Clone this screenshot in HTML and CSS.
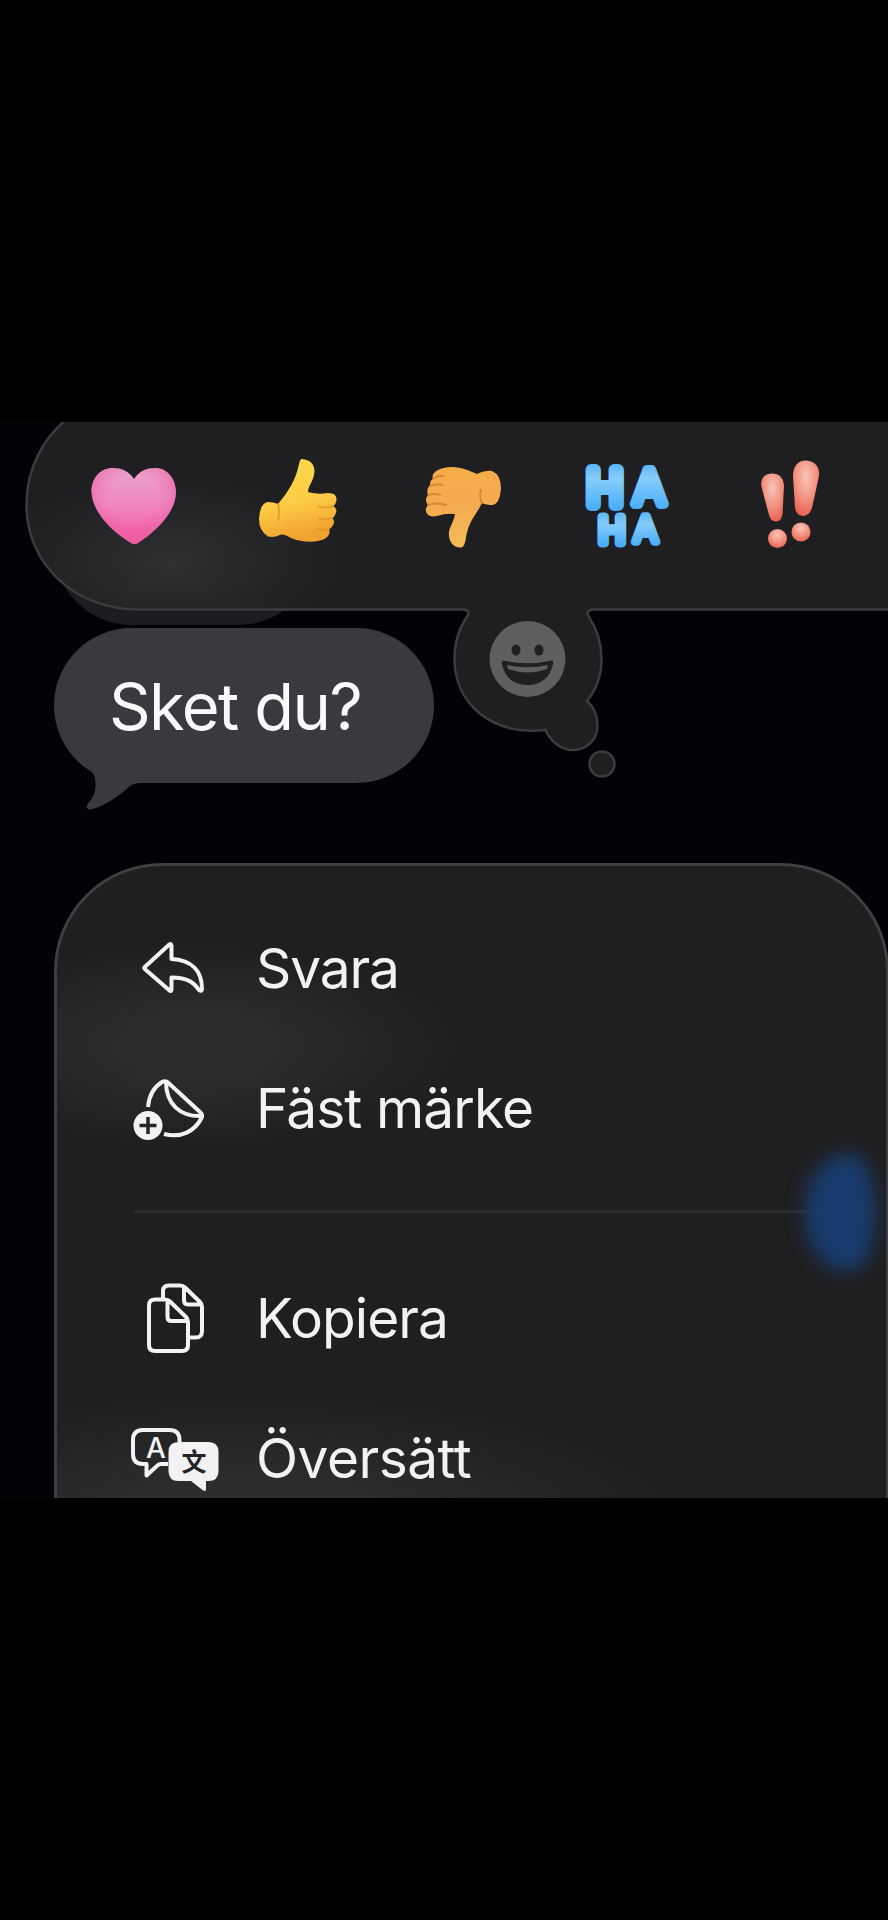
FILE: index.html
```html
<!DOCTYPE html>
<html lang="sv">
<head>
<meta charset="utf-8">
<title>Meddelanden</title>
<link rel="stylesheet" href="styles.css">
</head>
<body>
<main class="screen">
  <div class="previous-bubble"></div>
  <svg class="tray-shape" viewBox="0 422 888 360" aria-hidden="true">
    <defs>
      <clipPath id="trayClip"><path d="M66 400C40 435 28 470 28 505C28 562 73 608 140 608H900V400Z"/></clipPath>
      <radialGradient id="trayGlow"><stop offset="0" stop-color="#303032"/><stop offset=".45" stop-color="#2b2b2e" stop-opacity=".75"/><stop offset="1" stop-color="#29292c" stop-opacity="0"/></radialGradient>
    </defs>
    <path class="glass" d="M72 415C42 437 26.500 470 26.500 505C26.500 563 73 609.500 140 609.500H463Q471 610 467.500 616C459 628 454.500 643 454.500 659C454.500 703 491 736 545.500 730C551 742 561 750 573 750C587 750 597.500 739 597.500 726C597.500 716 594 707 587 701C597 689 601.500 674 601.500 659C601.500 643 597 629 589 617Q585 610 593 609.500H900V415Z"/>
    <g clip-path="url(#trayClip)">
      <ellipse cx="170" cy="562" rx="170" ry="85" fill="url(#trayGlow)"/>
    </g>
    <circle class="glass" cx="602" cy="764" r="12.500"/>
    <circle cx="527.500" cy="659" r="38" fill="#5f5f61"/>
    <ellipse cx="516" cy="650" rx="4.500" ry="5.500" fill="#202022"/>
    <ellipse cx="539" cy="650" rx="4.500" ry="5.500" fill="#202022"/>
    <path d="M503.500 660.500Q527.500 666 551.500 660.500Q554 660.500 553 664C550 678 541 685 527.500 685C514 685 505 678 502 664Q501.500 660.500 503.500 660.500Z" fill="#202022"/>
    <path d="M507 665Q527.500 669.500 548 665L547 669Q528 676 508 669Z" fill="#5f5f61"/>
  </svg>

  <nav class="reactions">
    <svg class="reaction" viewBox="52 422 164 188">
      <defs>
        <linearGradient id="heart" x1="0" y1="0" x2="0" y2="1"><stop offset="0" stop-color="#e9a6ca"/><stop offset=".5" stop-color="#f184bf"/><stop offset="1" stop-color="#f25598"/></linearGradient>
        <radialGradient id="heartShade" cx=".5" cy=".4" r=".6"><stop offset=".5" stop-color="#ec5da5" stop-opacity="0"/><stop offset="1" stop-color="#ec5da5" stop-opacity=".7"/></radialGradient>
      </defs>
      <path d="M134 479C129 471 121 468 113 468C100 468 91.500 478 91.500 492C92.500 512 111 531 131 543Q134.500 545 138 543C158 530 175.500 512 176 492C175.500 478 167 468 155 468C147 468 139 471 134 479Z" fill="url(#heart)"/>
      <path d="M134 479C129 471 121 468 113 468C100 468 91.500 478 91.500 492C92.500 512 111 531 131 543Q134.500 545 138 543C158 530 175.500 512 176 492C175.500 478 167 468 155 468C147 468 139 471 134 479Z" fill="url(#heartShade)"/>
    </svg>
    <svg class="reaction" viewBox="216 422 164 188">
      <defs>
        <linearGradient id="up" x1="0" y1="0" x2=".2" y2="1"><stop offset="0" stop-color="#fbdb4e"/><stop offset=".6" stop-color="#fdcb45"/><stop offset="1" stop-color="#f0a32f"/></linearGradient>
      </defs>
      <path d="M302 459Q314 460 314.500 471C314 481 308 486 308 492Q318 495 328 493Q337 493 336.500 500Q336 504 333.500 506Q338 510 335.500 514Q334 517.500 332.500 518Q335.500 522 332.500 526Q331 528.500 329 529Q331 534 326 538C318 543 303 543 291 538Q285 534 281 534.500Q275 538 268 536.500Q259 531 259 519Q260 503 268 502Q273 502 278 504C288 492 296 480 299 464Q300 459 302 459Z" fill="url(#up)"/>
      <g class="crease crease-up"><path d="M333 506Q325 509 319 506.500"/><path d="M332 518Q325 520.500 319 518"/><path d="M329 529Q324 531 318 529"/><path d="M278 504Q280 513 278 520"/></g>
    </svg>
    <svg class="reaction" viewBox="380 422 164 188">
      <defs>
        <linearGradient id="down" x1="0" y1="0" x2=".1" y2="1"><stop offset="0" stop-color="#f5ad49"/><stop offset=".5" stop-color="#f4ab50"/><stop offset="1" stop-color="#f4bb58"/></linearGradient>
      </defs>
      <path d="M452 467C462 467 470 471 477 474Q486 470 492 471Q501 475 501 488Q500 503 493 505Q486 505 482 503C477 514 469 520 466 537Q465 547 461 547.500C453 548 448 541 449 532C450 526 454 521 455 514Q446 513 437 516Q427 518 426 511Q425 508 428 505Q424 500 428 495Q426 489 430 485Q430 480 433 479Q431 475 436 471Q443 467 452 467Z" fill="url(#down)"/>
      <g class="crease crease-down"><path d="M433 479Q438 475 443 476"/><path d="M430 486Q437 483 442 485"/><path d="M428 495Q435 493 440 495"/><path d="M428 505Q436 502 446 505"/><path d="M482 503Q479 497 481 490"/></g>
    </svg>
    <svg class="reaction haha" viewBox="544 422 164 188">
      <defs>
        <linearGradient id="haBig" gradientUnits="userSpaceOnUse" x1="0" y1="464" x2="0" y2="511"><stop offset="0" stop-color="#59b4f6"/><stop offset=".3" stop-color="#86cdfb"/><stop offset="1" stop-color="#45acf8"/></linearGradient>
        <linearGradient id="haSmall" gradientUnits="userSpaceOnUse" x1="0" y1="512" x2="0" y2="547"><stop offset="0" stop-color="#5ab5f6"/><stop offset=".35" stop-color="#83cbfa"/><stop offset="1" stop-color="#43abf8"/></linearGradient>
      </defs>
      <text><tspan class="ha-big" x="587" y="504.500">H</tspan><tspan class="ha-big ha-big-a" x="633.500" y="503.500">A</tspan><tspan class="ha-small" x="598.500" y="542.500">H</tspan><tspan class="ha-small ha-small-a" x="633.500" y="542">A</tspan></text>
    </svg>
    <svg class="reaction" viewBox="708 422 164 188">
      <defs>
        <radialGradient id="bang" cx=".5" cy=".3" r=".75"><stop offset="0" stop-color="#f9c5b9"/><stop offset=".5" stop-color="#f39583"/><stop offset="1" stop-color="#e75c4d"/></radialGradient>
      </defs>
      <g fill="url(#bang)">
        <path d="M772 473.500C779 473.500 784 478 784 486L782.500 514Q781.500 521.500 776 521.500Q770.500 521.500 769 515L761.500 487C760 479 764 474 772 473.500Z"/>
        <path d="M806 460.500C815 461 820 467 819 476L812 508Q809 516 803 516Q796 515 795 508L793 476C793 466 798 460.500 806 460.500Z"/>
        <circle cx="777.500" cy="538.500" r="9.500"/><circle cx="801" cy="532" r="9.500"/>
      </g>
    </svg>
  </nav>

  <div class="bubble">
    <span class="bubble-text">Sket du?</span>
    <svg class="bubble-tail" viewBox="80 750 70 62" aria-hidden="true"><path d="M80 758C88 766 95 772 95.500 783C96 795 90 801 87 805Q85.500 809 90 809.500C105 807 121 794 130 786Q134 783 142 783V750H80Z" fill="#3a393d"/></svg>
  </div>

  <section class="menu">
    <div class="glow glow-text"></div>
    <div class="glow glow-bottom"></div>
    <div class="row">
      <svg class="icon" viewBox="130 898 92 140"><path d="M144.800 967L169 944.800Q171.500 943 171.500 946V959C192 960 202 971 202 989Q202 992 199 990C193 981 185 977.500 171.500 977.500V989Q171.500 992.500 169 990L144.800 969Q143.800 968 144.800 967Z"/></svg>
      <span>Svara</span>
    </div>
    <div class="row">
      <svg class="icon" viewBox="130 1038 92 140"><path d="M148 1107C149 1096 154 1087 162 1082Q165.500 1080 168.500 1083L200.500 1112.500Q203 1115 201.500 1118C195 1131 181 1138.500 164 1134M166 1082C166 1104 180 1117 202 1116"/><circle class="solid" cx="148" cy="1125.500" r="14.500"/><path class="cut" d="M139.500 1125.500H156.500M148 1117V1134"/></svg>
      <span class="sticker-label">Fäst märke</span>
    </div>
    <hr class="divider">
    <div class="glow glow-blue"></div>
    <div class="row">
      <svg class="icon" viewBox="130 1248 92 140"><path d="M155 1299.500H165Q168 1299.500 170 1301.500L186 1317Q188 1319 188 1322V1345Q188 1351 182 1351H155Q149 1351 149 1345V1305.500Q149 1299.500 155 1299.500ZM167.500 1300.500V1317Q167.500 1321 171.500 1321H188M163 1299V1291Q163 1285.500 169 1285.500H180Q183 1285.500 185 1287.500L200 1302Q202 1304 202 1307V1331Q202 1337.500 196 1337.500H189M184 1287V1300Q184 1304.500 188 1304.500H201"/></svg>
      <span class="copy-label">Kopiera</span>
    </div>
    <div class="row">
      <svg class="icon" viewBox="130 1388 92 140"><path d="M179.500 1442V1440Q179.500 1430 169.500 1430H143Q133 1430 133 1440V1454Q133 1464 143 1464H146.500V1475.500L158 1465Q159 1464 161 1464H168"/><path class="solid" d="M178.500 1442H208.500Q218.500 1442 218.500 1452V1471Q218.500 1481 208.500 1481H206V1489Q206 1492.500 202.500 1490L191 1481H178.500Q168.500 1481 168.500 1471V1452Q168.500 1442 178.500 1442Z"/><text class="glyph-a" x="156" y="1457.500" text-anchor="middle">A</text><text class="glyph-zh" x="194" y="1470.500" text-anchor="middle">文</text></svg>
      <span class="translate-label">Översätt</span>
    </div>
  </section>
</main>
</body>
</html>
```
FILE: styles.css
```css
html, body {
  margin: 0;
  background: #000;
}

body {
  height: 1920px;
  overflow: hidden;
  padding-top: 422px;
  box-sizing: border-box;
  font-family: Inter, "Liberation Sans", sans-serif;
  font-variant-ligatures: none;
  color: #f2f2f4;
}

.screen {
  position: relative;
  display: flex;
  flex-direction: column;
  align-items: flex-start;
  width: 888px;
  height: 1076px;
  overflow: hidden;
  background: #020207;
}

/* Dimmed message that the reaction tray covers */
.previous-bubble {
  position: absolute;
  left: 54px;
  top: 48px;
  width: 262px;
  height: 155px;
  border-radius: 78px;
  background: #1d1d21;
}

.tray-shape {
  position: absolute;
  left: 0;
  top: 0;
  width: 888px;
  height: 360px;
}

.glass {
  fill: #1f1f21;
  stroke: #3c3c3f;
  stroke-width: 2.5;
}

.reactions {
  position: relative;
  display: flex;
  padding-left: 52px;
  height: 188px;
  flex: none;
}

.reaction {
  width: 164px;
  height: 188px;
}

.crease {
  fill: none;
  stroke-width: 2;
  stroke-linecap: round;
}

.crease-up {
  stroke: #dd9427;
  opacity: .75;
}

.crease-down {
  stroke: #c87829;
  opacity: .7;
}

.haha {
  font-family: Inter, "Liberation Sans", sans-serif;
  font-weight: 300;
  stroke-linejoin: round;
}

.ha-big {
  font-size: 48px;
  fill: url(#haBig);
  stroke: url(#haBig);
  stroke-width: 12px;
}

.ha-big-a {
  font-size: 47px;
  stroke-width: 10px;
}

.ha-small {
  font-size: 36px;
  fill: url(#haSmall);
  stroke: url(#haSmall);
  stroke-width: 9px;
}

.ha-small-a {
  stroke-width: 7.5px;
}

.bubble {
  position: relative;
  display: flex;
  align-items: center;
  flex: none;
  box-sizing: border-box;
  width: 380px;
  height: 155px;
  margin: 18px 0 0 54px;
  padding: 2px 0 0 55px;
  border-radius: 78px;
  background: #3a393d;
}

.bubble-text {
  font-size: 65px;
  line-height: 80px;
  letter-spacing: -1.6px;
  white-space: nowrap;
  color: #fafafc;
}

.bubble-tail {
  position: absolute;
  left: 26px;
  top: 122px;
  width: 70px;
  height: 62px;
}

.menu {
  position: relative;
  flex: none;
  box-sizing: border-box;
  width: 835px;
  height: 800px;
  margin: 80px 0 0 54px;
  padding-top: 32px;
  border: 3px solid #3f3f41;
  border-radius: 108px;
  overflow: hidden;
  background: #1f1f21;
}

.glow {
  position: absolute;
}

.glow-text {
  left: -120px;
  top: 80px;
  width: 520px;
  height: 200px;
  background: radial-gradient(closest-side, #2d2d30 25%, #2d2d3000);
}

.glow-bottom {
  left: -250px;
  top: 530px;
  width: 880px;
  height: 280px;
  background: radial-gradient(closest-side, #2d2d30 35%, #2d2d3000);
}

.glow-blue {
  left: 748px;
  top: 288px;
  width: 70px;
  height: 117px;
  border-radius: 42px 22px 22px 42px / 58px;
  background: #183c6e;
  filter: blur(9px);
}

.row {
  position: relative;
  display: flex;
  align-items: center;
  gap: 34px;
  height: 140px;
  padding-left: 73px;
  font-size: 55px;
  line-height: 66px;
  letter-spacing: -1.1px;
  white-space: nowrap;
}

.sticker-label,
.copy-label {
  letter-spacing: -.9px;
}

.translate-label {
  letter-spacing: -.5px;
}

.icon {
  flex: none;
  width: 92px;
  height: 140px;
  fill: none;
  stroke: #f2f2f4;
  stroke-width: 4;
  stroke-linejoin: round;
  letter-spacing: 0;
}

.icon .solid {
  fill: #f2f2f4;
  stroke: none;
}

.icon .cut {
  stroke: #252528;
  stroke-width: 3.5;
}

.icon text {
  stroke: none;
}

.glyph-a {
  font-size: 28px;
  font-weight: 500;
  fill: #f2f2f4;
}

.glyph-zh {
  font-family: "Noto Sans CJK SC", sans-serif;
  font-size: 25px;
  font-weight: 700;
  fill: #252528;
}

.divider {
  position: relative;
  width: 676px;
  height: 3px;
  margin: 32px 0 35px 77px;
  border: 0;
  background: #2d2d2f;
}
```
